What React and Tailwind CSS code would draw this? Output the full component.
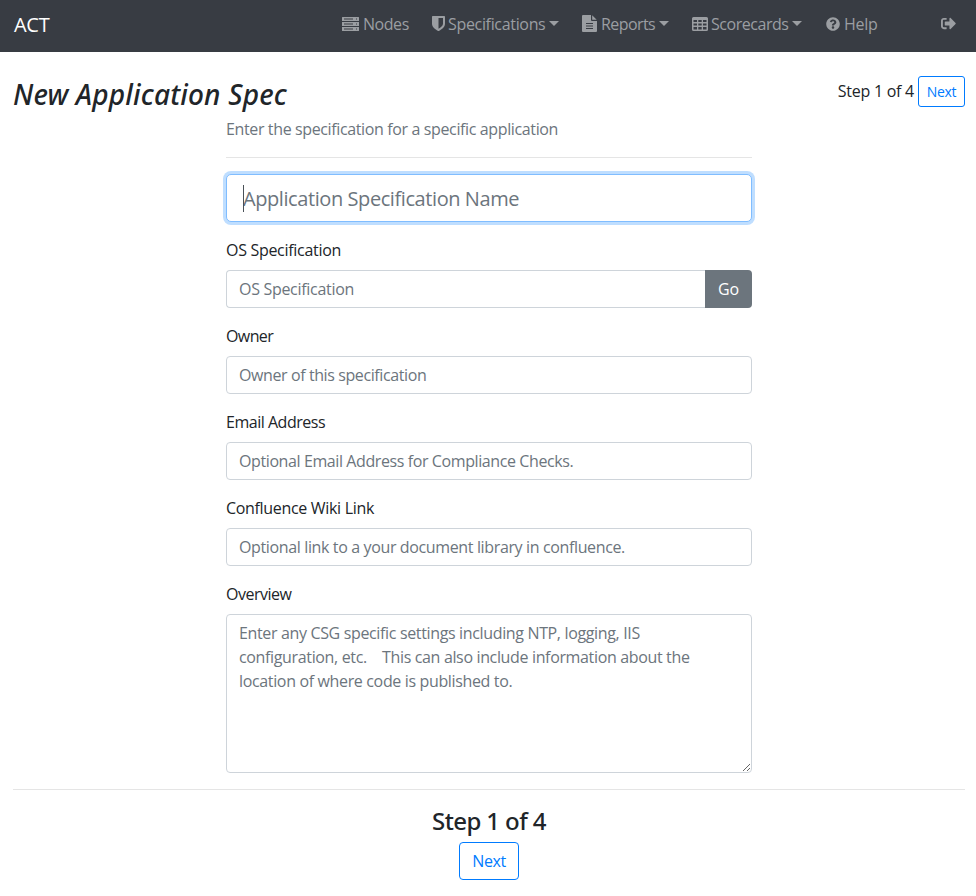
import { FaQuestionCircle } from "react-icons/fa";

const ServerIcon = () => (
  <svg className="h-[14px] w-[17px]" viewBox="0 0 17 14" fill="currentColor" fillRule="evenodd">
    <path d="M.5 0h16q.5 0 .5.5V4H0V.5Q0 0 .5 0zM2 1.5v1h9v-1zM14 1.5v1h1v-1z" />
    <path d="M0 5h17v4H0zM2 6.5v1h9v-1zM14 6.5v1h1v-1z" />
    <path d="M0 10h17v3.5q0 .5-.5.5H.5Q0 14 0 13.5zM2 11.5v1h9v-1zM14 11.5v1h1v-1z" />
  </svg>
);

const ShieldIcon = () => (
  <svg className="h-[15px] w-[13px]" viewBox="0 0 13 15" fill="currentColor" fillRule="evenodd">
    <path d="M.7 0h11.6q.7 0 .7.7v7.1c0 3.7-3.7 6-6.2 7.1q-.3.1-.6 0C3.7 13.8 0 11.5 0 7.8V.7Q0 0 .7 0zM6.5 2v10.7C8.7 11.5 11 9.9 11 7.8V2z" />
  </svg>
);

const FileIcon = () => (
  <svg className="h-[17px] w-[15px]" viewBox="0 0 15 17" fill="currentColor" fillRule="evenodd">
    <path d="M1 0h8v5q0 1 1 1h5v10q0 1-1 1H1q-1 0-1-1V1Q0 0 1 0zM4 8v1h7V8zM4 10.5v1h7v-1zM4 13v1h7v-1z" />
    <path d="M10.2.2L14.7 4.8H10.2z" />
  </svg>
);

const TableIcon = () => (
  <svg className="h-[14px] w-[16px]" viewBox="0 0 16 14" fill="currentColor" fillRule="evenodd">
    <path d="M1.5 0h13Q16 0 16 1.5v11q0 1.5-1.5 1.5h-13Q0 14 0 12.5v-11Q0 0 1.5 0zM1.5 3v2H5V3zM6.300 3v2h3.400V3zM11 3v2h3.500V3zM1.500 6.500v2H5v-2zM6.300 6.500v2h3.400v-2zM11 6.500v2h3.500v-2zM1.500 10v2.500H5V10zM6.300 10v2.500h3.400V10zM11 10v2.500h3.500V10z" />
  </svg>
);

const SignOutIcon = () => (
  <svg className="h-[15px] w-[15px]" viewBox="0 0 512 512" fill="currentColor">
    <path d="M497 273L329 441c-15 15-41 4.500-41-17v-96H152c-13.300 0-24-10.700-24-24v-96c0-13.300 10.700-24 24-24h136v-96c0-21.400 25.900-32 41-17l168 168c9.300 9.400 9.300 24.600 0 34zM192 436v-40c0-6.600-5.400-12-12-12H96c-17.700 0-32-14.300-32-32V160c0-17.700 14.300-32 32-32h84c6.600 0 12-5.400 12-12V76c0-6.600-5.400-12-12-12H96c-53 0-96 43-96 96v192c0 53 43 96 96 96h84c6.600 0 12-5.400 12-12z" />
  </svg>
);

const Caret = () => (
  <svg className="h-[5px] w-[10px]" viewBox="0 0 10 5" fill="currentColor">
    <path d="M0 0h10L5 5z" />
  </svg>
);

const inputClass =
  "block w-full h-[38px] rounded border border-[#ced4da] bg-white px-3 text-[16px] leading-6 text-[#495057] placeholder:text-[#6c757d] placeholder:opacity-100 outline-none";

function Field({ label, labelClass, placeholder, inputSpacing }) {
  return (
    <div className="mb-4">
      <label className={`mb-2 block leading-6 ${labelClass}`}>{label}</label>
      <input className={`${inputClass} ${inputSpacing}`} placeholder={placeholder} />
    </div>
  );
}

export default function App() {
  return (
    <div className="h-[896px] overflow-hidden bg-white font-['Open_Sans',sans-serif] text-[16px] leading-6 text-[#212529]">
      <nav className="flex h-[52px] items-center bg-[#383c43] pb-[3px] pl-[14px] text-[#9b9ea2]">
        <a className="w-[328px] text-[20px] tracking-[-0.3px] text-white">ACT</a>
        <div className="flex items-center pb-[2px]">
          <a className="flex w-[90px] items-center gap-1 tracking-[-0.45px]"><ServerIcon />Nodes</a>
          <a className="flex w-[150px] items-center gap-[3px] tracking-[-0.33px]"><ShieldIcon /><span className="mr-px">Specifications</span><Caret /></a>
          <a className="flex w-[110px] items-center gap-1 tracking-[-0.58px]"><FileIcon /><span>Reports</span><Caret /></a>
          <a className="flex w-[134px] items-center gap-[3px] tracking-[-0.46px]"><TableIcon /><span>Scorecards</span><Caret /></a>
          <a className="flex w-[115px] items-center gap-1 tracking-[-0.3px]"><FaQuestionCircle className="h-[14px] w-[14px]" />Help</a>
          <a><SignOutIcon /></a>
        </div>
      </nav>

      <header className="flex h-[65px] items-start justify-between pl-[13px] pr-[11px] pt-6">
        <h1 className="pt-px font-['Noto_Sans',sans-serif] text-[28px] font-medium italic leading-[34px] tracking-[0.17px]">New Application Spec</h1>
        <div className="flex items-center gap-1">
          <span className="pb-[2px] tracking-[-0.25px]">Step 1 of 4</span>
          <button className="h-[31px] w-[47px] rounded-[3px] border border-[#007bff] text-[14px] leading-[21px] tracking-[-0.3px] text-[#007bff]">Next</button>
        </div>
      </header>

      <main className="mx-auto w-[526px] translate-x-px">
        <p className="text-[#6c757d] tracking-[-0.37px]">Enter the specification for a specific application</p>
        <hr className="mb-4 mt-4 border-t border-[#e5e5e5]" />
        <div className="relative mb-4">
          <input
            className="block h-12 w-full rounded-[5px] border border-[#80bdff] bg-white px-4 text-[20px] tracking-[-0.42px] shadow-[0_0_0_3px_#bfdeff] outline-none placeholder:text-[#6c757d] placeholder:opacity-100"
            placeholder="Application Specification Name"
          />
          <span className="absolute left-[17px] top-[11px] h-[27px] w-px bg-[#495057]" />
        </div>
        <div className="mb-4">
          <label className="mb-2 block tracking-[-0.3px]">OS Specification</label>
          <div className="flex">
            <input className={`${inputClass} flex-1 rounded-r-none border-r-0 tracking-[-0.3px]`} placeholder="OS Specification" />
            <button className="h-[38px] w-[47px] rounded-r bg-[#6c757d] tracking-[-0.2px] text-white">Go</button>
          </div>
        </div>
        <Field label="Owner" labelClass="tracking-[-0.6px]" placeholder="Owner of this specification" inputSpacing="tracking-[-0.4px]" />
        <Field label="Email Address" labelClass="tracking-[-0.48px]" placeholder="Optional Email Address for Compliance Checks." inputSpacing="tracking-[-0.4px]" />
        <Field label="Confluence Wiki Link" labelClass="tracking-[-0.32px]" placeholder="Optional link to a your document library in confluence." inputSpacing="tracking-[-0.365px]" />
        <label className="mb-2 block tracking-[-0.48px]">Overview</label>
        <textarea
          className="block h-[159px] w-full resize rounded border border-[#ced4da] px-3 py-1.5 leading-6 tracking-[-0.35px] outline-none placeholder:text-[#6c757d] placeholder:opacity-100"
          placeholder="Enter any CSG specific settings including NTP, logging, IIS configuration, etc.    This can also include information about the location of where code is published to."
        />
      </main>

      <hr className="ml-[13px] mr-[11px] mt-4 border-t border-[#e5e5e5]" />
      <footer className="flex translate-x-px flex-col items-center pt-4">
        <h4 className="mb-[7px] font-['Noto_Sans',sans-serif] text-[24px] font-medium leading-[29px] tracking-[-0.6px]">Step 1 of 4</h4>
        <button className="h-[38px] w-[60px] rounded border border-[#007bff] tracking-[-0.4px] text-[#007bff]">Next</button>
      </footer>
    </div>
  );
}
